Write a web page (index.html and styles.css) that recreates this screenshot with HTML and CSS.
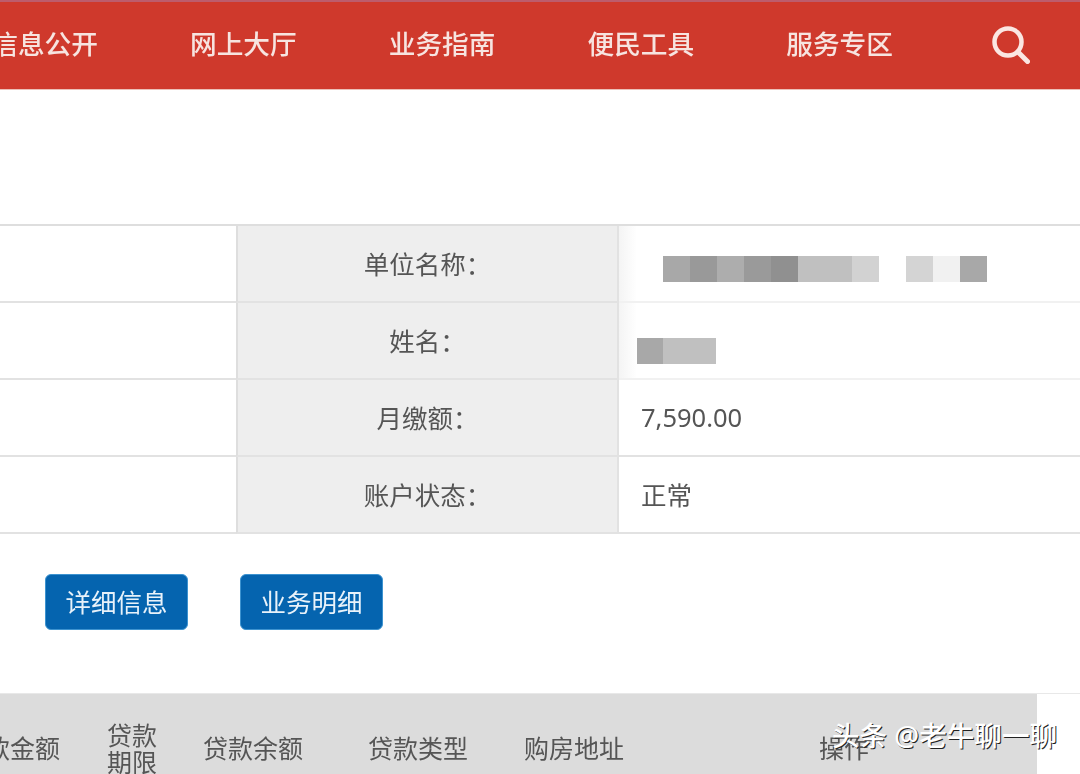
FILE: index.html
```html
<!DOCTYPE html>
<html lang="zh-CN">
<head>
  <meta charset="UTF-8">
  <title>账户信息</title>
  <link rel="stylesheet" href="styles.css">
</head>
<body>

  <!-- Nav -->
  <nav class="nav">
    <a class="nav-link">信息公开</a>
    <a class="nav-link">网上大厅</a>
    <a class="nav-link">业务指南</a>
    <a class="nav-link">便民工具</a>
    <a class="nav-link">服务专区</a>
    <svg class="search-icon" viewBox="0 0 38 38" fill="none" stroke="currentColor" stroke-linecap="round">
      <circle cx="16" cy="16" r="13.5" stroke-width="4.5"/>
      <path d="M26 26l9.5 9.5" stroke-width="5"/>
    </svg>
  </nav>

  <!-- Account info -->
  <section class="info">
    <div class="info-cell"></div>
    <div class="info-label">单位名称：</div>
    <div class="info-value info-value-masked">
      <div class="mosaic mosaic-company">
        <i class="m-a"></i><i class="m-b"></i><i class="m-c"></i><i class="m-d"></i><i class="m-e"></i><i class="m-f"></i><i class="m-f"></i><i class="m-g"></i><i class="m-none"></i><i class="m-h"></i><i class="m-i"></i><i class="m-a"></i>
      </div>
    </div>

    <div class="info-cell"></div>
    <div class="info-label">姓名：</div>
    <div class="info-value info-value-masked">
      <div class="mosaic mosaic-name">
        <i class="m-a"></i><i class="m-f"></i><i class="m-f"></i>
      </div>
    </div>

    <div class="info-cell"></div>
    <div class="info-label">月缴额：</div>
    <div class="info-value info-value-text">7,590.00</div>

    <div class="info-cell"></div>
    <div class="info-label">账户状态：</div>
    <div class="info-value info-value-text">正常</div>
  </section>

  <div class="actions">
    <button class="btn">详细信息</button>
    <button class="btn">业务明细</button>
  </div>

  <!-- Loan table header -->
  <div class="loan-wrap">
    <div class="loan-head">
      <div class="loan-col loan-col-amount">贷款金额</div>
      <div class="loan-col loan-col-term">贷款<br>期限</div>
      <div class="loan-col loan-col-balance">贷款余额</div>
      <div class="loan-col loan-col-type">贷款类型</div>
      <div class="loan-col loan-col-address">购房地址</div>
      <div class="loan-col loan-col-action">操作</div>
    </div>
  </div>

  <div class="watermark">头条 @老牛聊一聊</div>

</body>
</html>
```

FILE: styles.css
```css
* {
  box-sizing: border-box;
}

html, body {
  height: 774px;
  margin: 0;
  overflow: hidden;
}

body {
  position: relative;
  background: white;
  color: #555;
  font-family: "Noto Sans", "Noto Sans CJK SC", sans-serif;
  font-size: 25.5px;
}

.nav,
.info,
.actions,
.loan-wrap {
  filter: blur(0.5px);
}

.nav {
  height: 90px;
  display: flex;
  align-items: center;
  justify-content: flex-end;
  gap: 92px;
  padding-right: 50px;
  background: #cf392c;
  border-top: 2px solid #bd5c6c;
  border-bottom: 1px solid #ecc0b8;
  color: #f7e4e0;
}

.nav-link {
  flex: none;
  padding-bottom: 7px;
  font-size: 26.7px;
  font-weight: 500;
  white-space: nowrap;
}

.search-icon {
  flex: none;
  width: 38px;
  height: 38px;
  margin: 0 0 1px 7px;
  color: #fbe6e2;
}

.info {
  display: grid;
  grid-template-columns: 236px 383px 1fr;
  grid-auto-rows: 77px;
  margin-top: 134px;
  border-top: 2px solid #dedede;
}

.info-cell,
.info-label,
.info-value {
  display: flex;
  align-items: center;
  padding-bottom: 3px;
  border-bottom: 2px solid #e2e2e2;
}

.info-label {
  justify-content: center;
  background: #eeeeee;
  border-left: 2px solid #dedede;
  border-right: 2px solid #e2e2e2;
}

.info-value {
  padding-left: 22px;
}

.info-value-text {
  padding-bottom: 2px;
}

.info-value-masked {
  border-bottom-color: #f1f1f1;
  background: linear-gradient(to right, #f4f4f4, white 18px);
}

.mosaic {
  display: flex;
}

.mosaic i {
  width: 27px;
  height: 26px;
}

.mosaic-company {
  margin: 13px 0 0 22px;
}

.mosaic-name {
  margin: 23px 0 0 -4px;
}

.mosaic-name i {
  width: 26.4px;
}

.m-a { background: #a8a8a8; }
.m-b { background: #999999; }
.m-c { background: #adadad; }
.m-d { background: #9a9a9a; }
.m-e { background: #909090; }
.m-f { background: #c0c0c0; }
.m-g { background: #d2d2d2; }
.m-h { background: #d4d4d4; }
.m-i { background: #f1f1f1; }
.m-none { background: white; }

.actions {
  display: flex;
  gap: 52px;
  padding: 40px 0 0 45px;
}

.btn {
  width: 143px;
  height: 56px;
  padding: 0 0 3px;
  background: #0564af;
  border: 1px solid #3d93d0;
  border-radius: 6px;
  color: #e8f2fa;
  font-family: inherit;
  font-size: 25.5px;
}

.loan-wrap {
  margin-top: 63px;
  border-top: 1px solid #e8e8e8;
}

.loan-head {
  width: 1037px;
  height: 84px;
  display: grid;
  grid-template-columns: 72px 120px 122px 208px 104px 1fr;
  align-items: center;
  padding-top: 25px;
  background: #dcdcdc;
  font-size: 25px;
  text-align: center;
  line-height: 27px;
}

.loan-col {
  white-space: nowrap;
}

.loan-col-amount {
  display: flex;
  justify-content: flex-end;
  padding-right: 12px;
}

.loan-col-action {
  padding-left: 25px;
}

.watermark {
  position: absolute;
  left: 832px;
  top: 717px;
  color: white;
  font-size: 27.6px;
  font-weight: 500;
  line-height: 36px;
  white-space: nowrap;
  text-shadow: 1px 1px 0 #222;
}
```
